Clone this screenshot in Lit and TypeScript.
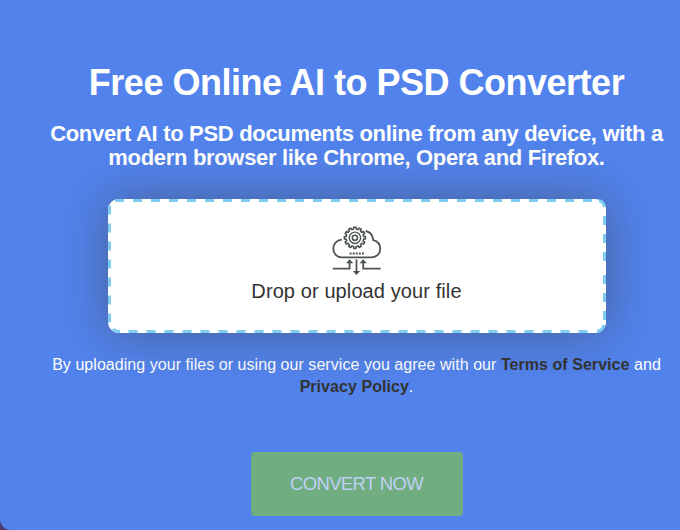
import { LitElement, html, css } from "lit";
import { customElement } from "lit/decorators.js";

/** Closed outline of a cog with square teeth. */
function cog(cx: number, cy: number, inner: number, outer: number, teeth: number): string {
  const step = 360 / teeth;
  const corners: string[] = [];
  for (let i = 0; i < teeth; i++) {
    const at = i * step - 90;
    for (const [offset, radius] of [[-0.28, inner], [-0.22, outer], [0.22, outer], [0.28, inner]]) {
      const a = ((at + offset * step) * Math.PI) / 180;
      corners.push(`${(cx + radius * Math.cos(a)).toFixed(2)} ${(cy + radius * Math.sin(a)).toFixed(2)}`);
    }
  }
  return `M${corners.join("L")}Z`;
}

@customElement("cloud-icon")
class CloudIcon extends LitElement {
  static styles = css`
    :host { display: block; width: 50px; height: 50px; }
    svg { display: block; }
  `;
  render() {
    return html`<svg width="50" height="50" viewBox="1 -0.5 50 50" fill="none" stroke="#4e5355" stroke-width="1.8" stroke-linejoin="round">
      <path d="M10.8 14.2 C5.6 14.8 2.3 18.5 2.3 23 C2.3 28 5.8 31.8 11 31.8 H40.5 C45.8 31.8 49.2 28.2 49.2 23.4 C49.2 19 46.6 15.6 42.2 14.6 C41.9 10 39 6.4 34.6 5.5" />
      <path d="${cog(23.9, 12.3, 8.8, 10.6, 12)}" stroke-width="1.6" />
      <circle cx="23.9" cy="12.3" r="5.7" stroke-width="1.4" />
      <circle cx="23.9" cy="12.3" r="2.6" stroke-width="1.6" />
      <path d="M18.6 28 H33" stroke-width="2" stroke-dasharray="1.9 1.2" />
      <path d="M1.8 43.2 H18.6 V37 M49.6 43.2 H32.2 V37 M25.5 34 V46" />
      <path d="M18.6 33.7 l-3.7 4 h7.4z M32.2 33.7 l-3.7 4 h7.4z M25.5 49.4 l-3.7 -4 h7.4z" fill="#4e5355" stroke="none" />
    </svg>`;
  }
}

@customElement("app-root")
class AppRoot extends LitElement {
  static styles = css`
    :host { display: block; height: 530px; overflow: hidden; background: #493d72; font-family: "Liberation Sans", Arial, sans-serif; }
    .panel { box-sizing: border-box; width: 713px; height: 530px; padding-top: 62px; background: #5283ec; border-radius: 0 0 0 11px; color: #fff; display: flex; flex-direction: column; align-items: center; text-align: center; white-space: nowrap; }
    h1 { margin: 0; font-size: 36px; line-height: 42px; font-weight: 700; letter-spacing: -0.5px; }
    h2 { margin: 18px 0 0; font-size: 22px; line-height: 24px; font-weight: 700; letter-spacing: -0.32px; }
    .drop { position: relative; box-sizing: border-box; width: 498px; height: 134px; margin-top: 29px; padding-top: 26px; border-radius: 11px; background: #fff; box-shadow: 0 0 48px rgba(60, 60, 60, 0.5); display: flex; flex-direction: column; align-items: center; color: #333; font-size: 20px; line-height: 24px; }
    .dashes { position: absolute; inset: 0; }
    .label { margin-top: 4px; letter-spacing: 0.1px; }
    .terms { margin: 21px 0 0; font-size: 16px; line-height: 22px; letter-spacing: 0.05px; }
    b { color: #333; }
    button { width: 212px; height: 64px; margin-top: 54px; padding: 0; border: 0; border-radius: 4px; background: #70ad80; color: #bfd0f6; font: 18.5px "Liberation Sans", Arial, sans-serif; letter-spacing: -0.66px; }
  `;
  render() {
    return html`<main class="panel">
      <h1>Free Online AI to PSD Converter</h1>
      <h2><span>Convert AI to PSD documents online from any device, with a</span><br /><span>modern browser like Chrome, Opera and Firefox.</span></h2>
      <section class="drop">
        <svg class="dashes" width="498" height="134" fill="none" stroke="#80cbf1" stroke-width="3" stroke-dasharray="9 9">
          <path d="M7 1.5 H486" />
          <path d="M491 1.5 Q495.5 2.5 496.5 8" stroke-dasharray="none" />
          <path d="M496.5 17 V63 M496.5 76 V122" />
          <path d="M496 126 Q494.5 131.5 489 132.5" stroke-dasharray="none" />
          <path d="M20.5 132.5 H485" />
          <path d="M5 130 Q7 132.5 12 132.5" stroke-dasharray="none" />
          <path d="M1.5 6.5 V124" />
        </svg>
        <cloud-icon></cloud-icon>
        <span class="label">Drop or upload your file</span>
      </section>
      <p class="terms"><span>By uploading your files or using our service you agree with our <b>Terms of Service</b> and</span><br /><span><b>Privacy Policy</b>.</span></p>
      <button>CONVERT NOW</button>
    </main>`;
  }
}
